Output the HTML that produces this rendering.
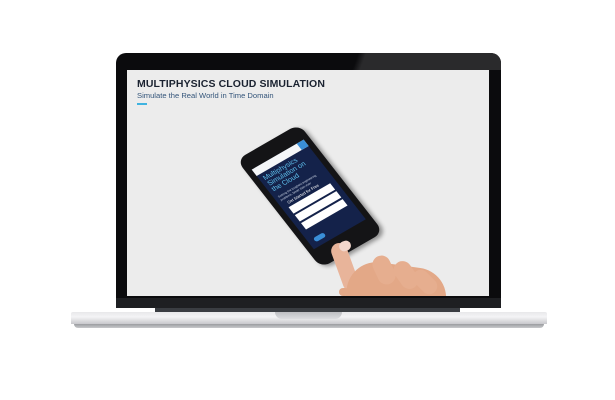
<!DOCTYPE html>
<html><head><style>
body{margin:0;width:615px;height:400px;background:#fff;position:relative;overflow:hidden;font-family:"Liberation Sans",sans-serif}
div{position:absolute;box-sizing:border-box}
</style></head><body>
<div style="left:116px;top:53px;width:385px;height:255px;background:#0b0b0d;border-radius:10px 10px 0 0"></div>
<div style="left:116px;top:53px;width:385px;height:17px;background:linear-gradient(110deg,transparent 0,transparent 62%,#2a2a2c 64%,#2a2a2c 100%);border-radius:10px 10px 0 0"></div>
<div style="left:127px;top:70px;width:362px;height:226px;background:#ececec;overflow:hidden">
  <div style="left:10px;top:8px;font-size:10.5px;font-weight:bold;color:#1a2230;white-space:nowrap;letter-spacing:0.1px">MULTIPHYSICS CLOUD SIMULATION</div>
  <div style="left:10px;top:21px;font-size:7.6px;color:#34557a;white-space:nowrap">Simulate the Real World in Time Domain</div>
  <div style="left:10px;top:33px;width:10px;height:2px;background:#3fb3e0"></div>
  <!-- phone -->
  <div style="left:147px;top:58px;width:72px;height:136px;background:#141416;border-radius:10px;transform:rotate(-30deg) skewX(8deg);box-shadow:2px 3px 4px rgba(0,0,0,.4)">
    <div style="left:6px;top:16px;width:60px;height:100px;background:#14224a">
      <div style="left:0;top:0;width:60px;height:8px;background:#f4f6f8"></div>
      <div style="left:52px;top:0;width:8px;height:8px;background:#3a8fd8"></div>
      <div style="left:4px;top:11px;font-size:7px;line-height:7px;color:#5fc0ee;width:54px">Multiphysics Simulation on the Cloud</div>
      <div style="left:4px;top:35px;font-size:3px;color:#cfd8e8;width:50px">Solving the toughest engineering problems, faster than ever</div>
      <div style="left:8px;top:44px;font-size:4px;color:#fff">Get Started for Free</div>
      <div style="left:6px;top:51px;width:48px;height:8px;background:#fff"></div>
      <div style="left:6px;top:61px;width:48px;height:8px;background:#fff"></div>
      <div style="left:6px;top:71px;width:48px;height:8px;background:#fff"></div>
      <div style="left:6px;top:90px;width:12px;height:5px;background:#3a8fd8;border-radius:3px"></div>
    </div>
  </div>
  <!-- hand -->
  <div style="left:210px;top:172px;width:16px;height:50px;background:#e8b49a;border-radius:8px;transform:rotate(-20deg)"></div>
  <div style="left:212px;top:171px;width:12px;height:10px;background:#f2d6cc;border-radius:6px;transform:rotate(-20deg)"></div>
  <div style="left:220px;top:195px;width:100px;height:50px;background:#e3a887;border-radius:30px 30px 0 0;transform:rotate(8deg)"></div>
  <div style="left:248px;top:185px;width:18px;height:30px;background:#e6ae8f;border-radius:9px;transform:rotate(-25deg)"></div>
  <div style="left:270px;top:190px;width:18px;height:30px;background:#e6ae8f;border-radius:9px;transform:rotate(-35deg)"></div>
  <div style="left:290px;top:198px;width:16px;height:28px;background:#e6ae8f;border-radius:8px;transform:rotate(-45deg)"></div>
  <div style="left:212px;top:218px;width:10px;height:8px;background:#e3a887;border-radius:5px"></div>
</div>
<div style="left:116px;top:298px;width:385px;height:10px;background:#1e1f22"></div>
<div style="left:155px;top:308px;width:305px;height:4px;background:#3a3d42"></div>
<div style="left:71px;top:312px;width:476px;height:12px;background:linear-gradient(#e8e8ea,#f4f4f6 40%,#c8c8cc);border-radius:2px 2px 0 0"></div>
<div style="left:74px;top:324px;width:470px;height:4px;background:linear-gradient(#9a9ca0,#c8c9cc);border-radius:0 0 40px 40px"></div>
<div style="left:275px;top:312px;width:67px;height:7px;background:linear-gradient(#bdbec2,#dcdde0);border-radius:0 0 8px 8px"></div>
</body></html>
